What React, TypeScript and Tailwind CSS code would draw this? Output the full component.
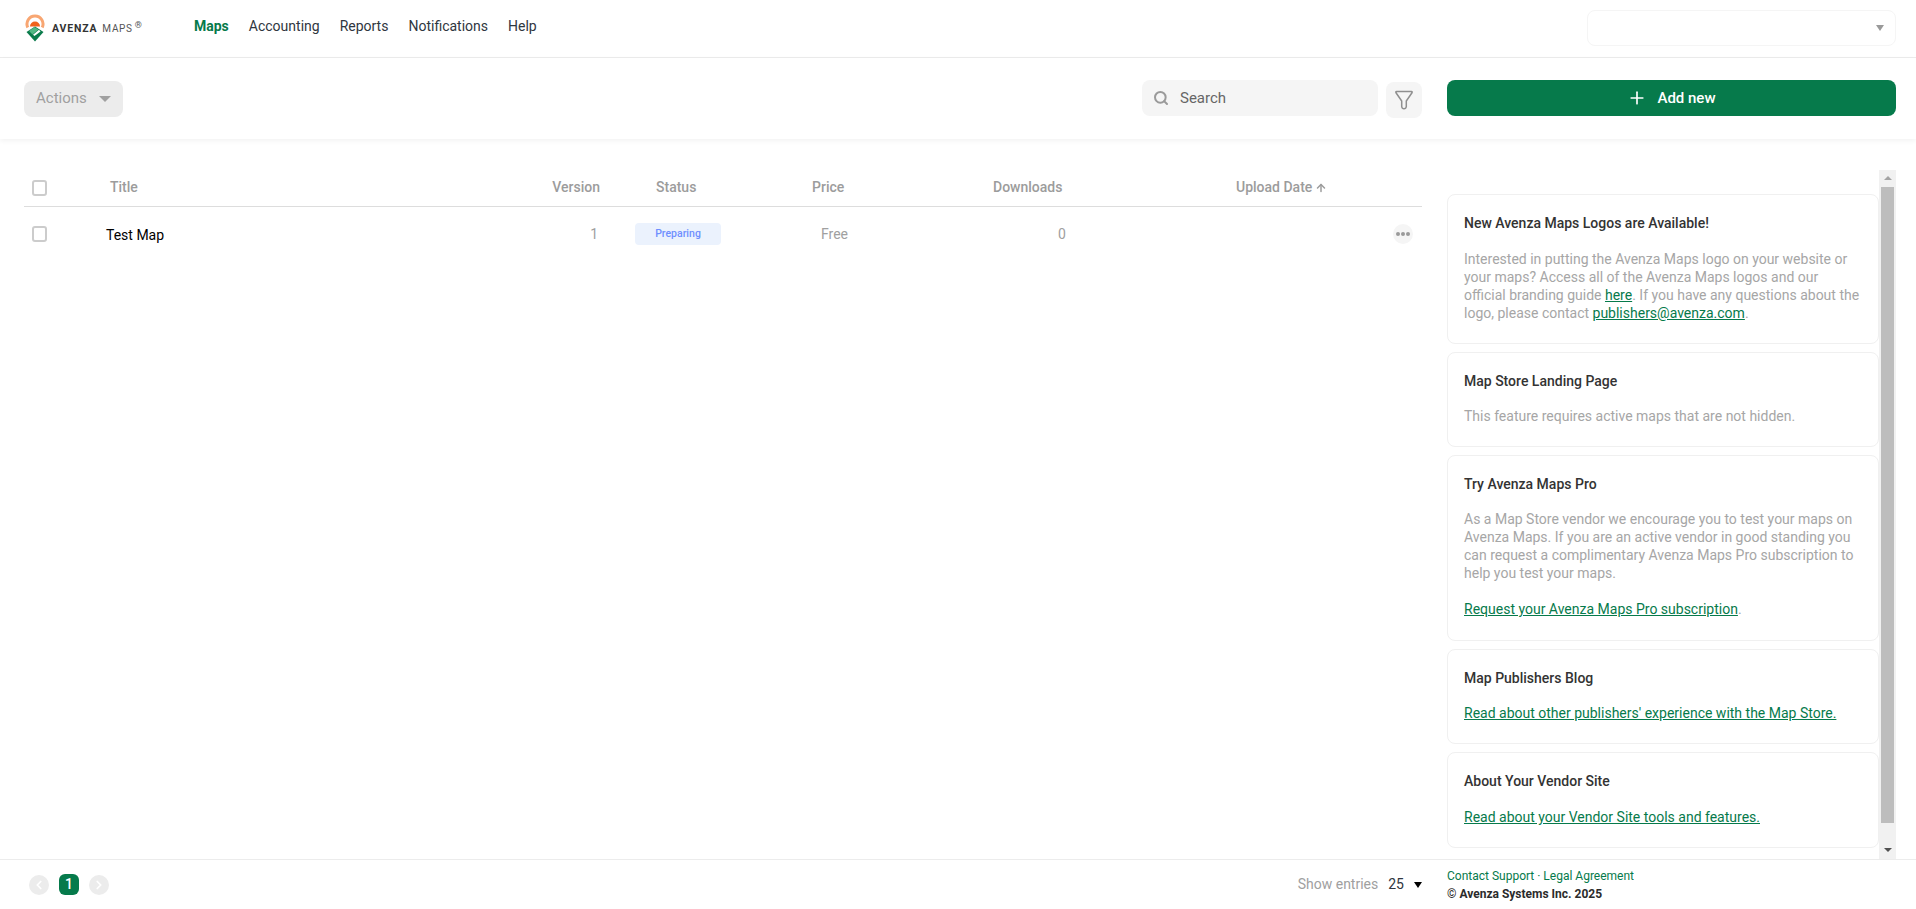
import React from "react";
import { Search, Plus, ChevronLeft, ChevronRight, ArrowUp } from "lucide-react";

const FONT = "font-['Roboto',sans-serif]";

const navItems = ["Maps", "Accounting", "Reports", "Notifications", "Help"];

function Logo() {
  return (
    <div className="flex w-[119px] shrink-0 items-center">
      <svg width="20" height="28" viewBox="0 0 20 28" className="mb-[1px] mr-[7px] shrink-0">
        {/* sun rings */}
        <path d="M2.800 13.500 A8 8 0 1 1 17.200 13.500" fill="none" stroke="#f8a672" strokeWidth="3" />
        <path d="M5 12.500 A5 5 0 0 1 15 12.500 Z" fill="#f0631c" />
        {/* green pin */}
        <path d="M10 12.500 L18.500 18 L10 27.500 L1.500 18 Z" fill="#0a7b4b" />
        <path d="M9.500 13 L13.500 15.500 L7.500 20.500 L4 17 Z" fill="#52b884" />
        <path d="M14 15.800 L15.500 17.500 L9.500 22 L8 20.800 Z" fill="#ffffff" />
      </svg>
      <span className="text-[10.5px] font-bold tracking-[0.08em] text-[#333333]">AVENZA</span>
      <span className="ml-[5px] text-[10px] font-normal tracking-[0.07em] text-[#555555]">MAPS</span>
      <span className="relative top-[-3px] ml-[2px] text-[9px] leading-none text-[#555555]">®</span>
    </div>
  );
}

function Checkbox() {
  return <span className="block h-[16px] w-[15px] rounded-[3px] border-2 border-[#cccccc] bg-white" />;
}

function Card({ title, children, className }: { title: string; children: React.ReactNode; className: string }) {
  return (
    <div className={`rounded-[8px] border border-[#f0f0f0] bg-white px-[16px] text-[14px] leading-[18px] text-[#a6a6a6] ${className}`}>
      <h3 className="pt-[19px] font-medium leading-[18px] text-[#333333]">{title}</h3>
      {children}
    </div>
  );
}

function GreenLink({ children }: { children: React.ReactNode }) {
  return <a className="text-[#067a4b] underline">{children}</a>;
}

export default function App() {
  return (
    <div className={`flex h-[909px] w-[1916px] flex-col overflow-hidden bg-white ${FONT}`}>
      {/* Top nav */}
      <header className="flex h-[58px] shrink-0 items-center border-b border-[#ececec] pl-[25px] pr-[20px]">
        <Logo />
        <nav className="mb-[4px] ml-[50px] flex gap-[20px] text-[14px]">
          {navItems.map((item) => (
            <a key={item} className={item === "Maps" ? "font-bold text-[#067a4b]" : "text-[#2f3640]"}>
              {item}
            </a>
          ))}
        </nav>
        <div className="mb-[1px] ml-auto flex h-[36px] w-[309px] items-center justify-end rounded-[8px] border border-[#f5f5f5] pr-[11px]">
          <span className="h-0 w-0 border-x-[4px] border-t-[6px] border-x-transparent border-t-[#9a9a9a]" />
        </div>
      </header>

      {/* Toolbar */}
      <div className="relative z-10 flex h-[81px] shrink-0 items-center bg-white pb-[1px] pl-[24px] pr-[20px] shadow-[0_2px_5px_rgba(0,0,0,0.05)]">
        <button className="mt-[1px] flex h-[36px] w-[99px] items-center rounded-[8px] bg-[#ececec] pl-[12px] text-[15px] text-[#a0a0a0]">
          Actions
          <span className="ml-[12px] h-0 w-0 border-x-[6px] border-t-[6px] border-x-transparent border-t-[#a0a0a0]" />
        </button>
        <div className="ml-auto flex h-[36px] w-[236px] items-center rounded-[8px] bg-[#f5f5f5] pl-[11px] text-[15px] text-[#666666]">
          <Search size={16} strokeWidth={3} className="mr-[11px] text-[#9a9a9a]" />
          Search
        </div>
        <div className="ml-[8px] mt-[3px] flex h-[36px] w-[36px] items-center justify-center rounded-[8px] bg-[#f5f5f5]">
          <svg width="20" height="20" viewBox="0 0 20 20" fill="none" stroke="#8f8f8f" strokeWidth="1.500" strokeLinejoin="round">
            <path d="M2.500 1.500 H17.500 Q18.500 1.500 18 2.800 L12.300 11 V16.500 Q12 18.800 10 18.800 Q8 18.800 7.700 16.500 V11 L2 2.800 Q1.500 1.500 2.500 1.500 Z" />
          </svg>
        </div>
        <button className="ml-[25px] flex h-[36px] w-[449px] items-center justify-center rounded-[8px] bg-[#067a4b] text-[15px] font-medium text-white">
          <Plus size={20} strokeWidth={2} className="mr-[10px]" />
          Add new
        </button>
      </div>

      {/* Content */}
      <main className="flex min-h-0 flex-1">
        <section className="ml-[24px] w-[1398px] shrink-0 text-[14px]">
          <div className="flex h-[68px] items-end border-b border-[#dddddd] pb-[8px] font-medium text-[#9c9c9c]">
            <div className="mb-[2px] w-[86px] shrink-0 pl-[8px]"><Checkbox /></div>
            <div className="w-[438px] shrink-0">Title</div>
            <div className="w-[52px] shrink-0 text-right">Version</div>
            <div className="ml-[56px] w-[156px] shrink-0">Status</div>
            <div className="w-[181px] shrink-0">Price</div>
            <div className="w-[243px] shrink-0">Downloads</div>
            <div className="flex items-center">
              Upload Date
              <ArrowUp size={12} strokeWidth={3} className="ml-[3px]" />
            </div>
          </div>
          <div className="flex h-[54px] items-center text-[#a0a0a0]">
            <div className="w-[82px] shrink-0 pl-[8px]"><Checkbox /></div>
            <div className="w-[462px] shrink-0 pt-[2px] text-black">Test Map</div>
            <div className="w-[30px] shrink-0 text-right">1</div>
            <div className="ml-[37px] flex h-[22px] w-[86px] shrink-0 items-center justify-center rounded-[4px] bg-[#ebf2fd] text-[10.5px] font-medium text-[#6f8fff]">
              Preparing
            </div>
            <div className="ml-[100px] w-[237px] shrink-0">Free</div>
            <div className="shrink-0">0</div>
            <div className="ml-auto mr-[9px] flex h-[20px] w-[20px] items-center justify-center gap-[1.500px] rounded-full bg-[#f5f5f5]">
              <span className="h-[3.500px] w-[3.500px] rounded-full bg-[#9a9a9a]" />
              <span className="h-[3.500px] w-[3.500px] rounded-full bg-[#9a9a9a]" />
              <span className="h-[3.500px] w-[3.500px] rounded-full bg-[#9a9a9a]" />
            </div>
          </div>
        </section>

        <aside className="ml-[25px] mt-[31px] flex w-[449px] shrink-0">
          <div className="flex w-[432px] shrink-0 flex-col gap-[8px] pt-[24px]">
            <Card title="New Avenza Maps Logos are Available!" className="h-[150px]">
              <p className="mt-[18px]">
                Interested in putting the Avenza Maps logo on your website or your maps? Access all of the Avenza Maps logos and our official branding guide <GreenLink>here</GreenLink>. If you have any questions about the logo, please contact <GreenLink>publishers@avenza.com</GreenLink>.
              </p>
            </Card>
            <Card title="Map Store Landing Page" className="h-[95px]">
              <p className="mt-[17px]">This feature requires active maps that are not hidden.</p>
            </Card>
            <Card title="Try Avenza Maps Pro" className="h-[186px]">
              <p className="mt-[17px]">
                As a Map Store vendor we encourage you to test your maps on Avenza Maps. If you are an active vendor in good standing you can request a complimentary Avenza Maps Pro subscription to help you test your maps.
              </p>
              <p className="mt-[18px]"><GreenLink>Request your Avenza Maps Pro subscription</GreenLink>.</p>
            </Card>
            <Card title="Map Publishers Blog" className="h-[95px]">
              <p className="mt-[17px]"><GreenLink>Read about other publishers' experience with the Map Store.</GreenLink></p>
            </Card>
            <Card title="About Your Vendor Site" className="h-[96px]">
              <p className="mt-[18px]"><GreenLink>Read about your Vendor Site tools and features.</GreenLink></p>
            </Card>
          </div>
          <div className="flex h-[689px] w-[17px] shrink-0 flex-col items-center bg-[#f1f1f1]">
            <span className="mt-[6px] h-0 w-0 border-x-[4px] border-b-[4px] border-x-transparent border-b-[#a3a3a3]" />
            <span className="mt-[7px] h-[636px] w-[13px] shrink-0 bg-[#bdbdbd]" />
            <span className="mt-[25px] h-0 w-0 border-x-[4px] border-t-[4px] border-x-transparent border-t-[#505050]" />
          </div>
        </aside>
      </main>

      {/* Footer */}
      <footer className="flex h-[50px] shrink-0 border-t border-[#ececec] pl-[29px] text-[14px]">
        <div className="flex items-center">
          <span className="flex h-[20px] w-[20px] items-center justify-center rounded-full bg-[#ececec] text-white">
            <ChevronLeft size={14} strokeWidth={3} />
          </span>
          <span className="ml-[10px] flex h-[21px] w-[20px] items-center justify-center rounded-[6px] bg-[#067a4b] font-medium text-white">1</span>
          <span className="ml-[10px] flex h-[20px] w-[20px] items-center justify-center rounded-full bg-[#ececec] text-white">
            <ChevronRight size={14} strokeWidth={3} />
          </span>
        </div>
        <div className="ml-auto flex items-center">
          <span className="text-[#a0a0a0]">Show entries</span>
          <span className="ml-[10px] text-[#2f3640]">25</span>
          <span className="ml-[10px] h-0 w-0 border-x-[4px] border-t-[6px] border-x-transparent border-t-black" />
        </div>
        <div className="ml-[25px] w-[469px] pt-[7px] text-[12px] leading-[18px]">
          <div className="text-[#067a4b]">Contact Support · Legal Agreement</div>
          <div className="font-bold text-[#2b2b2b]"><span className="font-normal">©</span> Avenza Systems Inc. 2025</div>
        </div>
      </footer>
    </div>
  );
}
